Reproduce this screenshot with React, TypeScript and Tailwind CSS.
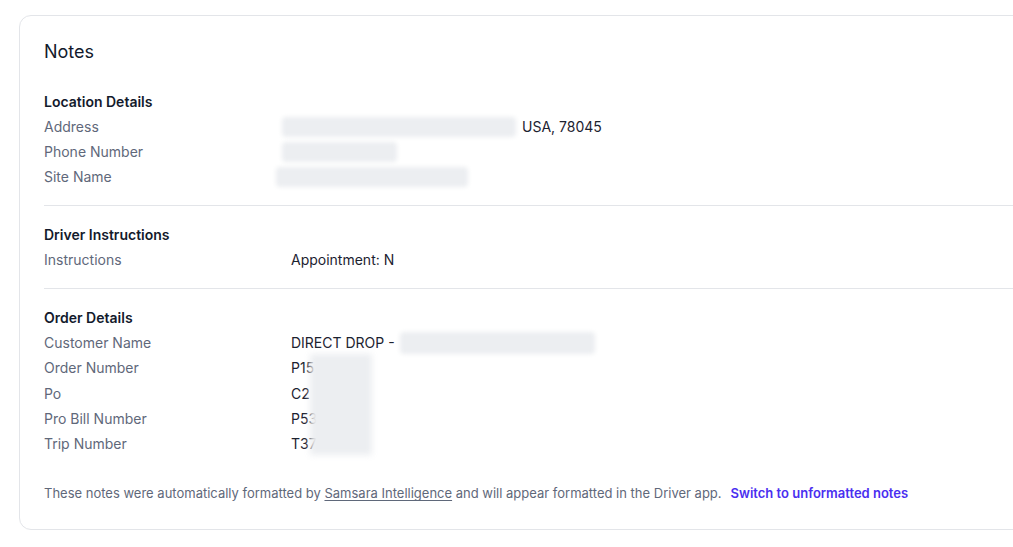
const LOCATION = [
  { label: 'Address', blur: 'w-[234px] -ml-[9px]', tail: 'USA, 78045' },
  { label: 'Phone Number', blur: 'w-[115px] -ml-[9px]', tail: '' },
  { label: 'Site Name', blur: 'w-[192px] -ml-[15px]', tail: '' },
]

const ORDER = [
  { label: 'Order Number', value: 'P15' },
  { label: 'Po', value: 'C2' },
  { label: 'Pro Bill Number', value: 'P53' },
  { label: 'Trip Number', value: 'T37' },
]

function Row({ label, tall, children }: { label: string; tall?: boolean; children?: React.ReactNode }) {
  return (
    <div className={`flex items-center text-[14px] ${tall ? 'h-[25.3px]' : 'h-[25px]'}`}>
      <div className="w-[247px] shrink-0 text-[#5f687a]">{label}</div>
      <div className="flex items-center text-[#1c2230]">{children}</div>
    </div>
  )
}

function Blur({ className }: { className: string }) {
  return <div className={`h-[20px] rounded-sm bg-[#eceef1] blur-[2px] ${className}`} />
}

export default function App() {
  return (
    <div className="h-[547px] w-[1013px] overflow-hidden bg-white pt-[15px] pl-[19px] font-['Inter',sans-serif]">
      <div className="w-[1100px] rounded-xl border border-[#e3e5e9] bg-white pt-[22px] pb-[26px] pl-[24px]">
        <h2 className="text-[18px] leading-7 text-[#131a2c]">Notes</h2>

        <section className="mt-[23px]">
          <h3 className="h-[25px] text-[14px] leading-[25px] font-semibold text-[#131a2c]">Location Details</h3>
          {LOCATION.map((r) => (
            <Row key={r.label} label={r.label}>
              <Blur className={r.blur} />
              {r.tail && <span className="ml-[6px]">{r.tail}</span>}
            </Row>
          ))}
        </section>

        <hr className="my-4 border-[#e3e5e9]" />

        <section>
          <h3 className="h-[25px] text-[14px] leading-[25px] font-semibold text-[#131a2c]">Driver Instructions</h3>
          <Row label="Instructions">Appointment: N</Row>
        </section>

        <hr className="my-4 border-[#e3e5e9]" />

        <section>
          <h3 className="h-[25px] text-[14px] leading-[25px] font-semibold text-[#131a2c]">Order Details</h3>
          <div className="relative">
            <Row label="Customer Name" tall>
              DIRECT DROP -<Blur className="ml-[5px] w-[195px] h-[22px]" />
            </Row>
            {ORDER.map((r) => (
              <Row key={r.label} label={r.label} tall>
                {r.value}
              </Row>
            ))}
            <div className="absolute top-[24px] left-[266px] h-[101px] w-[62px] bg-[#eceef1] blur-[3px]" />
          </div>
        </section>

        <p className="mt-[27px] text-[13px] leading-5 text-[#5f687a]">
          These notes were automatically formatted by <span className="underline underline-offset-2">Samsara Intelligence</span> and
          will appear formatted in the Driver app.
          <button className="ml-[9px] font-semibold text-[#4a2ff0]">Switch to unformatted notes</button>
        </p>
      </div>
    </div>
  )
}
